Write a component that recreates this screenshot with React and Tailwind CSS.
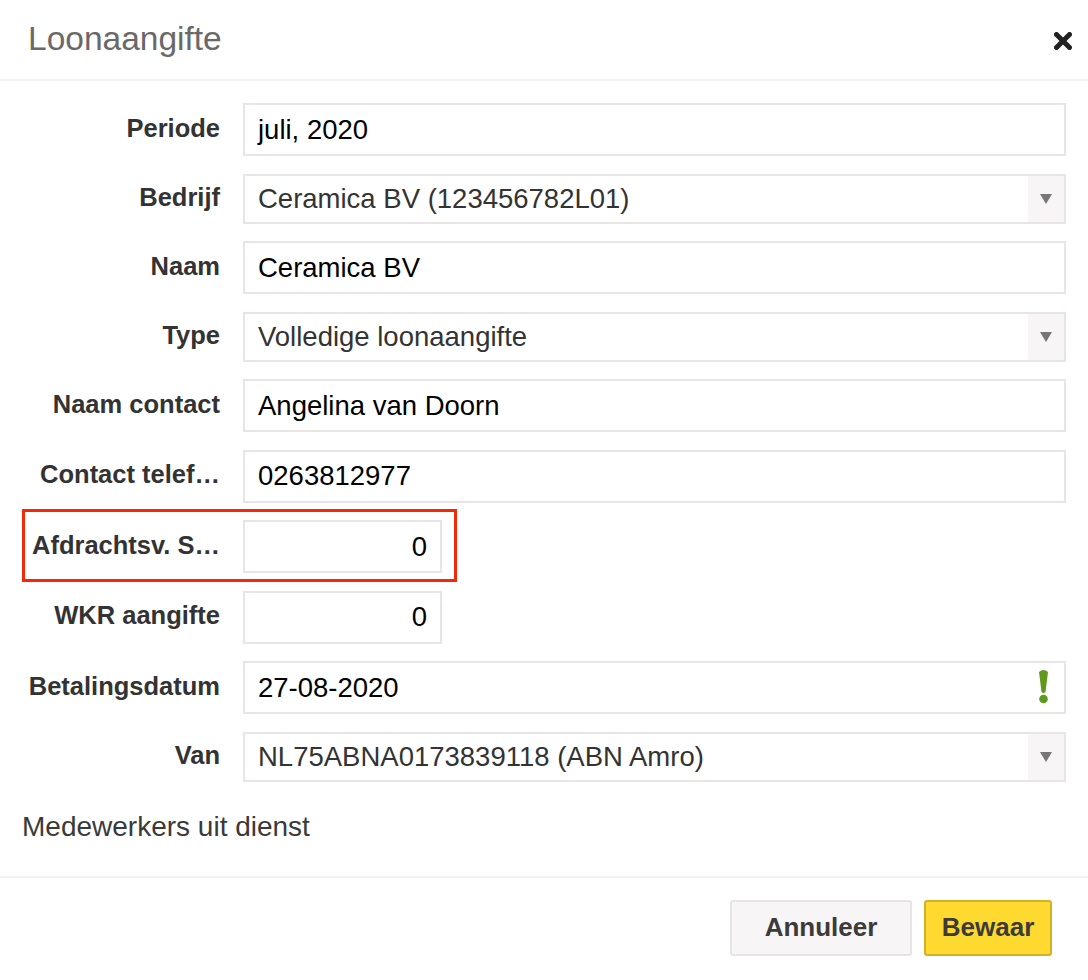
import React from "react";

const font = { fontFamily: '"Liberation Sans", Arial, sans-serif' };

function Label({ children }) {
    return (
        <div className="w-[198px] shrink-0 text-right text-[25.5px] font-bold text-[#333] leading-none whitespace-nowrap -mt-[2px]">
            {children}
        </div>
    );
}

function TextInput({ value, children }) {
    return (
        <div className="relative flex-1 h-[53px] border-2 border-[#e9e5e5] bg-white flex items-center px-[13px] text-[27.5px] text-black">
            {value}
            {children}
        </div>
    );
}

function SelectInput({ value }) {
    return (
        <div className="flex-1 h-[50px] border-2 border-[#e9e5e5] bg-white flex items-center text-[27.5px] text-[#333]">
            <div className="flex-1 px-[13px]">{value}</div>
            <div className="w-[36px] h-full bg-[#f7f5f5] flex items-center justify-center">
                <svg width="12" height="10" viewBox="0 0 12 10">
                    <path d="M0 0 H12 L6 10 Z" fill="#777" />
                </svg>
            </div>
        </div>
    );
}

function NumberInput({ value }) {
    return (
        <div className="w-[199px] h-[53px] border-2 border-[#e9e5e5] bg-white flex items-center justify-end px-[13px] text-[27.5px] text-black">
            {value}
        </div>
    );
}

function Row({ label, children, highlight }) {
    return (
        <div className="relative flex items-center gap-[23px]">
            {highlight && (
                <div className="absolute left-0 top-[-11px] w-[435px] h-[73px] border-[3px] border-[#f5290a]" />
            )}
            <Label>{label}</Label>
            {children}
        </div>
    );
}

export default function App() {
    return (
        <div className="w-[1088px] h-[980px] bg-white" style={font}>
            <div className="h-[81px] flex items-center justify-between pl-[28px] pr-[16px] border-b-2 border-[#f4f2f2]">
                <h1 className="text-[33.5px] text-[#6b6868]">Loonaangifte</h1>
                <svg width="18" height="18" viewBox="0 0 18 18" className="mt-[2px]">
                    <path d="M2.5 2.5 L15.5 15.5 M15.5 2.5 L2.5 15.5" stroke="#222" strokeWidth="5" strokeLinecap="round" />
                </svg>
            </div>

            <div className="px-[22px] pt-[22px] flex flex-col gap-[17.5px]">
                <Row label="Periode">
                    <TextInput value="juli, 2020" />
                </Row>
                <Row label="Bedrijf">
                    <SelectInput value="Ceramica BV (123456782L01)" />
                </Row>
                <Row label="Naam">
                    <TextInput value="Ceramica BV" />
                </Row>
                <Row label="Type">
                    <SelectInput value="Volledige loonaangifte" />
                </Row>
                <Row label="Naam contact">
                    <TextInput value="Angelina van Doorn" />
                </Row>
                <Row label="Contact telef…">
                    <TextInput value="0263812977" />
                </Row>
                <Row label="Afdrachtsv. S…" highlight>
                    <NumberInput value="0" />
                </Row>
                <Row label="WKR aangifte">
                    <NumberInput value="0" />
                </Row>
                <Row label="Betalingsdatum">
                    <TextInput value="27-08-2020">
                        <svg width="11" height="35" viewBox="0 0 11 35" className="absolute right-[15px] top-[6px]">
                            <path d="M1 3 Q5.5 -1 10 3 L7.5 23 Q5.5 25 3.5 23 Z" fill="#5f9a1c" />
                            <circle cx="5.5" cy="30" r="4.3" fill="#5f9a1c" />
                        </svg>
                    </TextInput>
                </Row>
                <Row label="Van">
                    <SelectInput value="NL75ABNA0173839118 (ABN Amro)" />
                </Row>
            </div>

            <div className="px-[22px] pt-[27px] pb-[31px] text-[28px] leading-[36px] text-[#3a3a3a] border-b-2 border-[#f4f2f2]">
                Medewerkers uit dienst
            </div>

            <div className="flex justify-end gap-[12px] pr-[36px] pt-[22px]">
                <button className="w-[182px] h-[56px] rounded-[3px] border-2 border-[#e6e4e4] bg-[#f7f5f6] text-[26px] font-bold text-[#3d3a3a]">
                    Annuleer
                </button>
                <button className="w-[128px] h-[56px] rounded-[3px] border-2 border-[#d2b02a] bg-[#fed92f] text-[26px] font-bold text-[#3d3a3a]">
                    Bewaar
                </button>
            </div>
        </div>
    );
}
